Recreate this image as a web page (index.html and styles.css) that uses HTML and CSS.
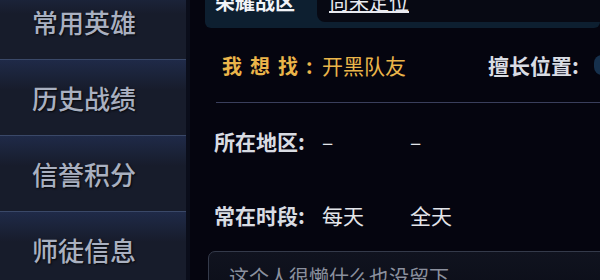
FILE: index.html
```html
<!DOCTYPE html>
<html lang="zh-CN">
<head>
    <meta charset="UTF-8">
    <title>个人资料</title>
    <link rel="stylesheet" href="styles.css">
</head>
<body>
    <div class="menu">
        <div class="item">常用英雄</div>
        <div class="item">历史战绩</div>
        <div class="item">信誉积分</div>
        <div class="item">师徒信息</div>
    </div>

    <div class="main">
        <div class="tabs">
            <div class="tab ativo">荣耀战区</div>
            <div class="tab outro"><span>尚未定位</span></div>
        </div>

        <div class="linha primeira">
            <span class="rotulo ouro">我想找:</span>
            <span class="valor ouro largo">开黑队友</span>
            <span class="rotulo">擅长位置:</span>
            <span class="pos"></span>
        </div>

        <div class="linha segunda">
            <span class="rotulo">所在地区:</span>
            <span class="valor">–</span>
            <span class="valor">–</span>
        </div>

        <div class="linha terceira">
            <span class="rotulo">常在时段:</span>
            <span class="valor">每天</span>
            <span class="valor">全天</span>
        </div>

        <div class="assinatura">这个人很懒什么也没留下</div>
    </div>
</body>
</html>
```

FILE: styles.css
```css
* {
    padding: 0;
    margin: 0;
    box-sizing: border-box;
}

body {
    display: flex;
    height: 280px;
    overflow: hidden;
    background-color: #05050f;
    font-family: "Noto Sans CJK SC", "Noto Sans", sans-serif;
}

.menu {
    width: 190px;
    flex-shrink: 0;
    background-color: #171c2a;
    border-right: 4px solid #0a0d1a;
    margin-top: -17px;
}

.item {
    height: 76px;
    padding-left: 32px;
    display: flex;
    align-items: center;
    font-size: 26px;
    font-weight: 500;
    color: #a9b0c0;
    text-shadow: 1px 1px 2px rgba(0, 0, 0, 0.8);
    border-top: 1px solid #3a4868;
    background: linear-gradient(#1f2a48, #171c2b 40%);
}

.main {
    flex: 1;
    overflow: hidden;
}

.tabs {
    display: flex;
    height: 28px;
    margin-left: 15px;
    background-color: #0d1f30;
    border-radius: 0 0 6px 6px;
    font-size: 20px;
    font-weight: bold;
    color: #f2f4f8;
}

.tab {
    line-height: 20px;
    margin-top: -8px;
    height: 30px;
}

.ativo {
    padding-left: 10px;
    width: 112px;
}

.outro {
    flex: 1;
    background-color: #070913;
    border-radius: 0 0 0 8px;
    padding-left: 12px;
    font-weight: normal;
    color: #e8eaf0;
}

.outro span {
    text-decoration: underline;
    text-underline-offset: 1px;
}

.linha {
    display: flex;
    align-items: center;
    margin-left: 24px;
    font-size: 21px;
    white-space: nowrap;
}

.linha span {
    flex-shrink: 0;
}

.primeira {
    height: 75px;
    margin-left: 26px;
    padding-left: 6px;
    border-bottom: 1px solid #3a3f5c;
}

.segunda {
    height: 76px;
}

.terceira {
    height: 72px;
}

.rotulo {
    width: 108px;
    font-weight: bold;
    color: #d9dce3;
}

.primeira .rotulo.ouro {
    width: 100px;
    font-size: 20px;
    letter-spacing: 8px;
}

.valor {
    width: 88px;
    color: #e3e5ea;
}

.largo {
    width: 166px;
}

.ouro {
    color: #ebb54a;
}

.pos {
    width: 30px;
    height: 20px;
    margin-left: -2px;
    border-radius: 8px;
    background-color: #16304c;
}

.assinatura {
    margin-left: 18px;
    margin-right: -10px;
    height: 60px;
    padding: 10px 20px;
    border: 1px solid #343a4a;
    border-radius: 7px;
    background: linear-gradient(#10131f, #0a0c16);
    font-size: 20px;
    color: #8b909e;
}
```
